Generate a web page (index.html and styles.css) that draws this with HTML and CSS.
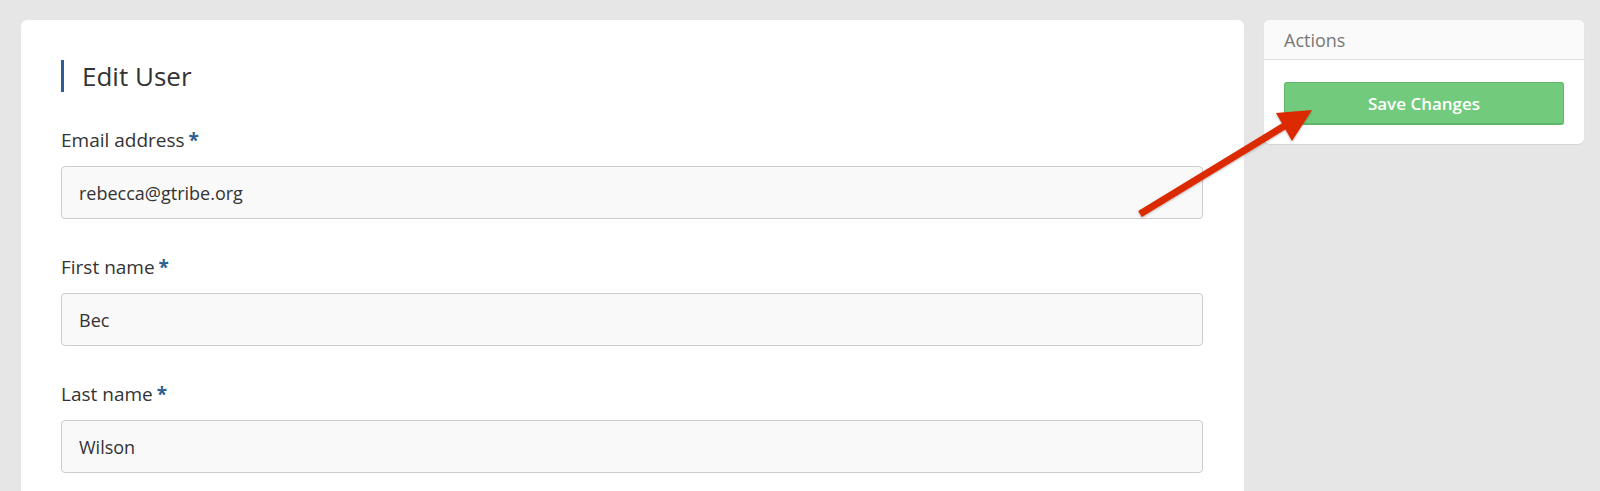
FILE: index.html
```html
<!DOCTYPE html>
<html>
<head>
<meta charset="utf-8">
<link rel="stylesheet" href="styles.css">
</head>
<body>
<div class="page">
  <div class="main-card">
    <h1 class="title">Edit User</h1>
    <div class="field">
      <label class="label">Email address<span class="req">*</span></label>
      <div class="input">rebecca@gtribe.org</div>
    </div>
    <div class="field">
      <label class="label">First name<span class="req">*</span></label>
      <div class="input">Bec</div>
    </div>
    <div class="field">
      <label class="label">Last name<span class="req">*</span></label>
      <div class="input">Wilson</div>
    </div>
  </div>
  <div class="side-card">
    <div class="side-head">Actions</div>
    <div class="side-body">
      <button class="save-btn">Save Changes</button>
    </div>
  </div>
</div>
<svg class="arrow" width="1600" height="491" viewBox="0 0 1600 491">
  <defs>
    <filter id="sh" x="-20%" y="-20%" width="140%" height="140%">
      <feDropShadow dx="0" dy="1" stdDeviation="1" flood-color="#000" flood-opacity="0.3"/>
    </filter>
  </defs>
  <g filter="url(#sh)">
    <line x1="1140" y1="214" x2="1286" y2="125" stroke="#dc2a00" stroke-width="7"/>
    <polygon points="1312,110 1276,113 1292,141" fill="#dc2a00"/>
  </g>
</svg>
</body>
</html>
```

FILE: styles.css
```css
html, body {
  margin: 0;
  padding: 0;
  background: #e6e6e6;
  font-family: "Open Sans", Lato, sans-serif;
  color: #333;
  height: 491px;
  overflow: hidden;
}
.page {
  display: flex;
  align-items: flex-start;
  gap: 20px;
  padding: 20px 16px 0 21px;
}
.main-card {
  width: 1223px;
  min-height: 520px;
  background: #fff;
  border-radius: 6px;
  padding: 40px 41px 0 40px;
  box-sizing: border-box;
}
.title {
  margin: 0 0 36px 0;
  border-left: 3px solid #2e5e91;
  padding-left: 18px;
  font-size: 26px;
  font-weight: 400;
  line-height: 32px;
  color: #333;
}
.field {
  display: flex;
  flex-direction: column;
  margin-bottom: 36px;
}
.label {
  font-size: 19px;
  line-height: 24px;
  margin-bottom: 14px;
  color: #333;
}
.req {
  color: #2e5e91;
  font-weight: 700;
  margin-left: 4px;
}
.input {
  height: 51px;
  border: 1px solid #cccccc;
  border-radius: 4px;
  background: #f9f9f9;
  padding: 0 17px;
  display: flex;
  align-items: center;
  font-size: 18px;
  color: #333;
}
.side-card {
  width: 320px;
  background: #fff;
  border-radius: 6px;
  overflow: hidden;
  box-shadow: 0 1px 1px rgba(0,0,0,0.08);
}
.side-head {
  height: 40px;
  background: #fafafa;
  border-bottom: 1px solid #dddddd;
  padding-left: 20px;
  display: flex;
  align-items: center;
  font-size: 18px;
  color: #777;
  box-sizing: border-box;
}
.side-body {
  padding: 22px 20px 19px 20px;
}
.save-btn {
  width: 100%;
  height: 43px;
  background: #72cb7d;
  border: 1px solid #5fb869;
  border-bottom-width: 2px;
  border-radius: 3px;
  color: #fff;
  font-family: "Open Sans", Lato, sans-serif;
  font-size: 17px;
  font-weight: 600;
  display: block;
}
.arrow {
  position: absolute;
  left: 0;
  top: 0;
  pointer-events: none;
}
```
